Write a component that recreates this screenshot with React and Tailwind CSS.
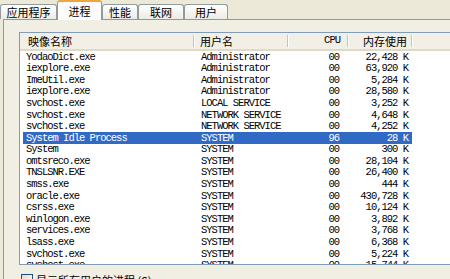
const tabs = [
  { label: '应用程序', w: 'w-[57px]' },
  { label: '进程', w: 'w-[45px]', active: true },
  { label: '性能', w: 'w-[36px]' },
  { label: '联网', w: 'w-[46px]' },
  { label: '用户', w: 'w-[44px]' },
];

const rows = [
  ['YodaoDict.exe', 'Administrator', '00', '22,428 K'],
  ['iexplore.exe', 'Administrator', '00', '63,920 K'],
  ['ImeUtil.exe', 'Administrator', '00', '5,284 K'],
  ['iexplore.exe', 'Administrator', '00', '28,580 K'],
  ['svchost.exe', 'LOCAL SERVICE', '00', '3,252 K'],
  ['svchost.exe', 'NETWORK SERVICE', '00', '4,648 K'],
  ['svchost.exe', 'NETWORK SERVICE', '00', '4,252 K'],
  ['System Idle Process', 'SYSTEM', '96', '28 K', true],
  ['System', 'SYSTEM', '00', '300 K'],
  ['omtsreco.exe', 'SYSTEM', '00', '28,104 K'],
  ['TNSLSNR.EXE', 'SYSTEM', '00', '26,400 K'],
  ['smss.exe', 'SYSTEM', '00', '444 K'],
  ['oracle.exe', 'SYSTEM', '00', '430,728 K'],
  ['csrss.exe', 'SYSTEM', '00', '10,124 K'],
  ['winlogon.exe', 'SYSTEM', '00', '3,892 K'],
  ['services.exe', 'SYSTEM', '00', '3,768 K'],
  ['lsass.exe', 'SYSTEM', '00', '6,368 K'],
  ['svchost.exe', 'SYSTEM', '00', '5,224 K'],
  ['svchost.exe', 'SYSTEM', '00', '15,744 K'],
];

const cjk = { fontFamily: '"Noto Sans CJK SC", "Liberation Sans", sans-serif' };
const mono = { fontFamily: '"Liberation Mono", "Noto Sans CJK SC", monospace' };

// header column separator
const Sep = () => (
  <div className="flex h-full items-center">
    <div className="h-[12px] w-px bg-[#C7C5B2]" />
    <div className="h-[12px] w-px bg-white" />
  </div>
);

export default function App() {
  return (
    <div className="relative w-[450px] h-[279px] overflow-hidden bg-[#ECE9D8]" style={cjk}>
      {/* Tab strip */}
      <div className="flex items-end h-[19px]">
        {tabs.map((t) =>
          t.active ? (
            <div
              key={t.label}
              className={`${t.w} relative z-10 h-[20px] -mb-px flex items-center justify-center bg-[#FCFCFE] border-x border-[#919B9C] border-t-[2px] border-t-[#F1A43A] rounded-t-[3px] text-[11px] text-black`}
            >
              {t.label}
            </div>
          ) : (
            <div
              key={t.label}
              className={`${t.w} h-[15px] flex items-center justify-center bg-gradient-to-b from-white to-[#ECEBE4] border-x border-t border-[#919B9C] rounded-t-[3px] text-[11px] text-black`}
            >
              {t.label}
            </div>
          )
        )}
      </div>

      {/* Panel */}
      <div className="ml-[3px] h-[262px] border-l border-t border-[#919B9C] bg-[#F1EFE4] pl-[15px] pt-[12px]">
        {/* List view */}
        <div className="w-[460px] h-[233px] border border-[#7F9DB9] bg-white overflow-hidden">
          <div className="flex h-[18px] bg-[#F1EFE6] border-b-[2px] border-[#DDDAC8] text-[11px] text-black">
            <div className="w-[173px] pl-[8px] flex items-center">映像名称</div>
            <Sep />
            <div className="w-[92px] pl-[5px] flex items-center">用户名</div>
            <Sep />
            <div className="w-[58px] pr-[7px] flex items-center justify-end" style={mono}>
              <span className="text-[10.5px] tracking-[-1px]">CPU</span>
            </div>
            <Sep />
            <div className="w-[62px] pr-[4px] flex items-center justify-end">内存使用</div>
            <Sep />
          </div>
          <div className="ml-[3px] text-[10.5px] tracking-[-1px] text-black" style={mono}>
            {rows.map(([name, user, cpu, mem, sel], i) => (
              <div
                key={i}
                className={`flex w-[389px] h-[11.6px] items-center leading-none ${sel ? 'bg-[#316AC5] text-white' : ''}`}
              >
                <div className="w-[171px] pl-[3px] whitespace-nowrap">{name}</div>
                <div className="w-[94px] pl-[7px] whitespace-nowrap">{user}</div>
                <div className="w-[60px] pr-[9px] text-right">{cpu}</div>
                <div className="w-[64px] pr-[4px] text-right whitespace-nowrap">{mem}</div>
              </div>
            ))}
          </div>
        </div>

        {/* Checkbox */}
        <div className="flex items-center gap-[3px] mt-[7px] ml-[2px] text-[11px] text-black">
          <div className="w-[12px] h-[12px] border border-[#1C5180] bg-gradient-to-br from-[#DCDBD5] to-white" />
          <span>
            显示所有用户的进程 (<span className="underline">S</span>)
          </span>
        </div>
      </div>
    </div>
  );
}
